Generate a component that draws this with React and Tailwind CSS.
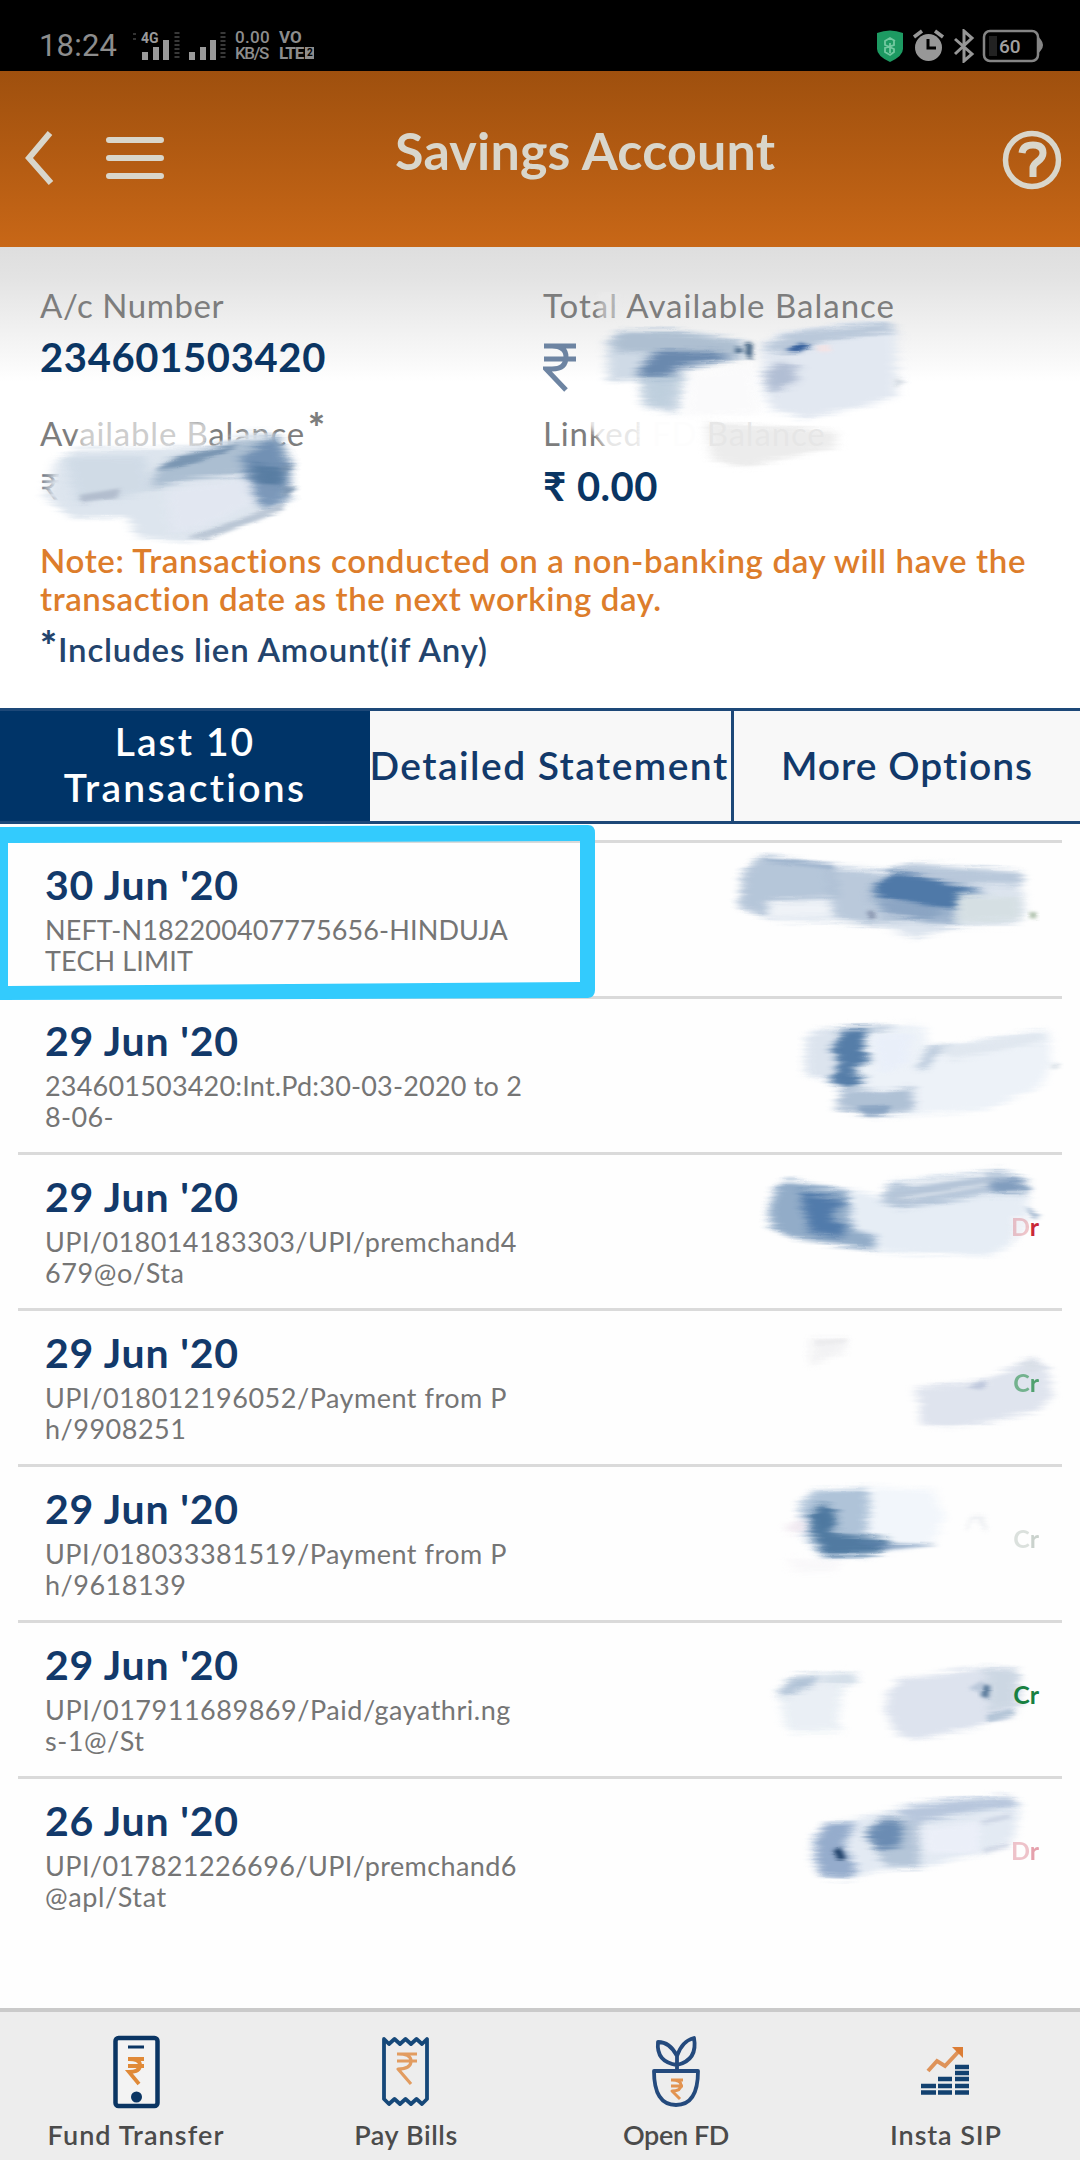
import React from "react";

const NAVY = "#0a3563";

/* Soft, dry-brush edge: blur mostly along the stroke, then streak it with stretched noise. */
function Brush({ id, blur, streak }) {
  return (
    <filter id={id} x="-40%" y="-60%" width="180%" height="220%" colorInterpolationFilters="sRGB">
      <feGaussianBlur stdDeviation={blur} result="soft" />
      <feTurbulence type="fractalNoise" baseFrequency="0.006 0.09" numOctaves="2" seed="4" result="noise" />
      <feDisplacementMap in="soft" in2="noise" scale={streak} xChannelSelector="R" yChannelSelector="G" />
      <feGaussianBlur stdDeviation="2 1.200" />
    </filter>
  );
}

/* One brush smear: a list of filled shapes, each softened. */
function Smear({ id, viewBox, shapes, className }) {
  return (
    <svg className={className} viewBox={viewBox} preserveAspectRatio="none" fill="none" aria-hidden="true">
      <g transform="translate(0 0)">
        <defs>
          <Brush id={id + "s"} blur="8 4" streak={12} />
          <Brush id={id + "m"} blur="15 8" streak={26} />
        </defs>
        {shapes.map(([d, fill, opacity, blur], i) => (
          <path key={i} d={d} fill={fill} opacity={opacity} filter={`url(#${id}${blur || "m"})`} />
        ))}
      </g>
    </svg>
  );
}

const B1 = "#5f83ad";
const B2 = "#a9bcd2";
const B3 = "#dce4ee";
const W = "#ffffff";

const rows = [
  {
    date: "30 Jun '20",
    lines: [["NEFT-N182200407775656-HINDUJA", "tracking-[0.13px]"], ["TECH LIMIT", "tracking-[0.13px]"]],
    viewBox: "0 33 1140 468",
    smear: [
      ["M130 130 L180 78 L400 100 L560 122 L640 98 L960 130 L975 240 L950 282 L770 290 L650 325 L520 285 L400 275 L220 270 L120 235 Z", B3, 1],
      ["M130 130 L180 80 L400 105 L420 200 L200 215 L200 260 L120 230 Z", B2, 0.75],
      ["M380 115 L560 130 L520 250 L540 290 L400 265 Z", B2, 0.65],
      ["M560 125 L640 102 L970 128 L960 165 L800 160 L700 270 L540 280 L500 200 Z", B2, 0.7],
      ["M180 84 L400 104 L400 118 L200 96 Z", B1, 0.3, "s"],
      ["M520 175 L575 128 L660 138 L860 185 L775 196 L770 242 L600 216 L530 200 Z", "#4f79a8", 1],
      ["M535 175 L580 134 L660 142 L770 175 L765 236 L600 210 Z", "#4f79a8", 0.6, "s"],
      ["M535 210 L760 240 L780 285 L690 280 L540 240 Z", B1, 0.5],
      ["M770 195 L960 200 L960 270 L770 280 Z", "#d3dedf", 0.7],
      ["M500 245 L520 240 L528 262 L512 270 Z", "#63708f", 0.6, "s"],
      ["M210 215 L380 215 L390 262 L215 262 Z", W, 0.55],
      ["M990 245 L1010 248 L1004 268 L992 264 Z", "#7c9a78", 0.75, "s"],
    ],
  },
  {
    date: "29 Jun '20",
    lines: [["234601503420:Int.Pd:30-03-2020 to 2", "tracking-[0.2px]"], ["8-06-", "tracking-[0.4px]"]],
    viewBox: "0 501 1140 468",
    smear: [
      ["M320 620 L360 595 L640 580 L680 600 L680 650 L1040 600 L1060 700 L1020 770 L860 840 L560 860 L430 830 L420 770 L320 730 Z", "#edf2f8", 1],
      ["M320 620 L370 595 L480 590 L470 760 L320 735 Z", B3, 0.95],
      ["M380 600 L560 582 L600 590 L510 610 Z", B2, 0.7],
      ["M395 660 L430 598 L500 595 L490 660 L515 690 L450 720 L500 745 L450 776 L390 755 L420 700 Z", "#557da8", 1],
      ["M405 655 L430 605 L480 605 L470 665 L435 690 L480 750 L445 768 L410 750 L420 700 Z", "#557da8", 0.4, "s"],
      ["M420 790 L460 770 L550 790 L640 770 L640 840 L520 860 L410 835 Z", B2, 0.9],
      ["M470 830 L570 825 L560 850 L500 858 Z", B1, 0.45, "s"],
      ["M650 715 L690 650 L760 645 L700 680 L680 720 Z", B2, 0.8],
      ["M700 655 L1020 605 L1040 630 L760 690 Z", "#dbe3ec", 0.7],
      ["M1050 705 L1078 700 L1078 715 L1056 718 Z", "#cfd8e0", 0.7, "s"],
      ["M520 620 L640 610 L620 700 L540 730 Z", "#e9effa", 0.9],
    ],
  },
  {
    date: "29 Jun '20",
    lines: [["UPI/018014183303/UPI/premchand4", "tracking-[0.41px]"], ["679@o/Sta", "tracking-[0.6px]"]],
    viewBox: "0 970 1140 468",
    tag: ["Dr", "text-[#c92838]", "opacity-25", "opacity-100"],
    smear: [
      ["M220 1090 L260 1050 L460 1080 L540 1100 L580 1050 L920 1020 L980 1050 L985 1150 L930 1250 L860 1280 L580 1270 L400 1245 L205 1185 Z", "#e6edf5", 1],
      ["M220 1090 L260 1052 L440 1085 L460 1200 L530 1220 L520 1262 L280 1225 L205 1185 Z", "#8ea9c6", 0.95],
      ["M300 1085 L440 1115 L400 1140 L400 1170 L440 1195 L420 1225 L330 1210 Z", "#4b76a8", 0.9],
      ["M560 1070 L900 1022 L980 1050 L975 1100 L870 1090 L600 1140 L545 1115 Z", B2, 0.8],
      ["M590 1060 L850 1030 L860 1040 L640 1072 Z", W, 0.55, "s"],
      ["M580 1105 L860 1060 L870 1068 L640 1110 Z", W, 0.35, "s"],
      ["M870 1050 L960 1040 L970 1085 L880 1095 Z", B1, 0.6],
      ["M950 1060 L1005 1078 L975 1086 Z", B1, 0.5, "s"],
      ["M975 1130 L1025 1158 L1000 1170 Z", B1, 0.5, "s"],
      ["M930 1160 L985 1160 L975 1200 L940 1240 Z", "#f1f2f7", 0.9, "s"],
    ],
  },
  {
    date: "29 Jun '20",
    lines: [["UPI/018012196052/Payment from P", "tracking-[0.51px]"], ["h/9908251", "tracking-[0.5px]"]],
    viewBox: "0 118 1140 468",
    tag: ["Cr", "text-[#2d9150]", "opacity-60", "opacity-80"],
    smear: [
      ["M330 205 L440 205 L430 250 L330 290 Z", "#f0f0f2", 0.8],
      ["M345 212 L440 206 L440 220 L350 226 Z", "#e6e6e9", 0.6, "s"],
      ["M640 355 L860 330 L960 280 L1000 262 L1040 290 L1060 380 L1010 425 L860 460 L740 475 L660 465 L660 400 Z", "#dfe4ee", 1],
      ["M800 352 L850 332 L862 345 L840 360 Z", "#bcc6db", 0.9, "s"],
      ["M960 285 L1000 268 L1035 292 L980 310 Z", "#d8dee6", 0.9],
    ],
  },
  {
    date: "29 Jun '20",
    lines: [["UPI/018033381519/Payment from P", "tracking-[0.51px]"], ["h/9618139", "tracking-[0.5px]"]],
    viewBox: "0 585 1140 468",
    tag: ["Cr", "text-[#a9b6ad]", "opacity-40", "opacity-60"],
    smear: [
      ["M300 710 L340 660 L520 650 L700 660 L730 740 L700 820 L500 865 L380 868 L300 800 Z", "#f2f6fb", 1],
      ["M300 710 L340 662 L500 655 L510 700 L500 790 L550 815 L500 862 L370 868 L310 790 Z", "#a4bbd3", 0.85],
      ["M330 735 L370 695 L415 735 L395 785 L570 812 L540 848 L380 854 L335 790 Z", "#4c779f", 0.95],
      ["M340 740 L370 715 L405 745 L385 775 L350 770 Z", "#4c779f", 0.5, "s"],
      ["M460 815 L720 825 L560 840 Z", B1, 0.6, "s"],
      ["M255 770 L310 740 L320 790 L260 790 Z", "#f0e8f0", 0.9],
      ["M260 860 L420 880 L420 905 L280 905 Z", "#f6f4f7", 0.6],
      ["M795 770 L815 735 L855 735 L862 790 L845 775 L835 750 L810 755 L803 785 Z", "#eef0f3", 0.9, "s"],
    ],
  },
  {
    date: "29 Jun '20",
    lines: [["UPI/017911689869/Paid/gayathri.ng", "tracking-[0.53px]"], ["s-1@/St", "tracking-[0.5px]"]],
    viewBox: "0 -57 1140 468",
    tag: ["Cr", "text-[#188041]", "opacity-100", "opacity-100"],
    smear: [
      ["M235 160 L280 108 L440 95 L480 110 L430 150 L410 250 L430 275 L270 275 L245 220 Z", "#e9eff5", 0.95],
      ["M235 160 L275 115 L360 105 L340 135 L260 165 Z", "#b0c2d6", 1],
      ["M350 110 L470 95 L460 135 L380 130 Z", "#d2dde8", 0.9],
      ["M560 160 L600 120 L860 80 L950 85 L965 190 L940 225 L800 270 L640 300 L590 285 L560 220 Z", "#dde3ee", 1],
      ["M850 85 L950 90 L955 190 L870 215 Z", "#c9d5e1", 0.8],
      ["M860 225 L940 205 L945 225 L860 245 Z", "#a9bdd1", 0.8, "s"],
      ["M843 168 L850 132 L870 138 L864 176 Z", "#4f7194", 1, "s"],
      ["M805 145 L850 120 L845 160 Z", "#b2c2d6", 0.8, "s"],
    ],
  },
  {
    date: "26 Jun '20",
    lines: [["UPI/017821226696/UPI/premchand6", "tracking-[0.41px]"], ["@apl/Stat", "tracking-[0.6px]"]],
    viewBox: "0 411 1140 468",
    tag: ["Dr", "text-[#e08a98]", "opacity-50", "opacity-80"],
    smear: [
      ["M340 590 L390 545 L540 520 L640 490 L920 465 L960 495 L940 600 L850 640 L680 680 L540 690 L460 715 L380 710 L330 660 Z", "#e3eaf3", 1],
      ["M345 600 L380 550 L470 550 L430 610 L470 690 L450 715 L360 705 L350 660 Z", "#91a9ca", 0.95],
      ["M495 575 L560 525 L660 540 L660 680 L560 680 L520 620 Z", B2, 0.8],
      ["M495 580 L550 542 L610 550 L605 622 L540 634 Z", B1, 0.85],
      ["M590 515 L650 495 L930 468 L960 495 L850 510 L640 550 Z", "#b3c3da", 0.9],
      ["M660 570 L840 545 L840 635 L680 640 Z", "#eef1fa", 0.8],
      ["M400 630 L420 618 L438 658 L414 658 Z", "#1f4068", 1, "s"],
      ["M850 625 L930 605 L930 625 L850 640 Z", "#c6cfe0", 0.7, "s"],
      ["M840 540 L930 520 L930 535 L850 556 Z", "#c6cfe0", 0.7, "s"],
    ],
  },
];

function StatusBar() {
  return (
    <div className="flex h-[71px] shrink-0 items-start bg-black pl-[39px] pr-[36px] pt-[29px] text-[#8d8d8d]">
      <span className="w-[94px] font-['Roboto'] text-[31px] leading-[34px] tracking-[0.2px]">18:24</span>
      <svg className="h-[34px] w-[98px]" viewBox="133 29 98 34" aria-hidden="true">
        <g fill="#9a9a9a">
          <path d="M142 60v-8h6v8zM153 60v-13h6v13zM163 60V40h6v20zM189 60v-8h6v8zM200 60v-13h6v13zM210 60V40h6v20z" />
        </g>
        <path d="M177 32v28M223 32v28" stroke="#383838" strokeWidth="5" strokeDasharray="2 2" />
        <path d="M134 33v10" stroke="#333" strokeWidth="4" strokeDasharray="2 3" />
        <text x="141" y="43" fontSize="14" fontWeight="700" fill="#9a9a9a" fontFamily="Roboto, sans-serif">4G</text>
      </svg>
      <div className="ml-1 flex w-[44px] flex-col font-['Roboto'] text-[17px] font-medium leading-[16px]">
        <span className="tracking-[0.3px]">0.00</span>
        <span className="tracking-[-1.4px]">KB/S</span>
      </div>
      <div className="flex flex-col font-['Roboto'] text-[17px] font-bold leading-[16px]">
        <span>VO</span>
        <span className="flex items-center tracking-[-1px]">
          LTE<span className="ml-0.5 flex h-3 w-[9px] items-center justify-center bg-[#8d8d8d] text-[10px] leading-none tracking-normal text-black">2</span>
        </span>
      </div>
      <svg className="ml-auto h-[34px] w-[168px]" viewBox="876 29 168 34" fill="none" aria-hidden="true">
        <path d="M877 33q13-5 26 0v16q0 7-13 13-13-6-13-13z" fill="#1d9a62" />
        <path d="M895 41l-5-3-5 3v4l9 4v3l-4 3-5-3v-4l9-3v-4M890 43v10" stroke="#73c9a0" strokeWidth="1.800" />
        <circle cx="928.500" cy="47.500" r="13.500" fill="#979797" />
        <path d="M914 37l8-6M943 37l-8-6" stroke="#979797" strokeWidth="3.500" />
        <path d="M928 39v9h8" stroke="#000" strokeWidth="3" />
        <path d="M955 39l17 15-8 7V31l8 7-17 16" stroke="#979797" strokeWidth="3" />
        <rect x="984" y="31" width="54" height="30" rx="6" stroke="#858585" strokeWidth="2.500" />
        <path d="M1040 40q4 5 0 10z" fill="#858585" stroke="#858585" strokeWidth="2" />
        <rect x="989" y="36" width="8" height="20" fill="#222" />
        <text x="999" y="53" fontSize="19" fontWeight="500" fill="#a0a0a0" fontFamily="Roboto, sans-serif">60</text>
      </svg>
    </div>
  );
}

function Header() {
  return (
    <header className="flex h-[176px] shrink-0 items-start bg-gradient-to-b from-[#9f500e] to-[#c86717] pl-[22px] pr-[17px] text-[#d9d6cb]">
      <svg className="mt-[58px] h-[58px] w-[33px]" viewBox="0 0 33 58" fill="none" stroke="currentColor" strokeWidth="6" aria-hidden="true">
        <path d="M28 4L7 29l22 25" />
      </svg>
      <svg className="ml-[50px] mt-[62px] h-[50px] w-[60px]" viewBox="0 0 60 50" fill="none" stroke="currentColor" strokeWidth="6" strokeLinecap="round" aria-hidden="true">
        <path d="M4 7h52M4 25h52M4 43h52" />
      </svg>
      <h1 className="ml-[230px] mt-[47px] whitespace-nowrap text-[52px] font-bold leading-[64px] tracking-[0.2px]">Savings Account</h1>
      <svg className="ml-auto mt-[59px] h-[62px] w-[62px]" viewBox="0 0 62 62" fill="none" stroke="currentColor" aria-hidden="true">
        <circle cx="31" cy="30" r="26.500" strokeWidth="5.500" />
        <path d="M21 23q1-8 11-8 10 0 10 8 0 5-6 9-4 3-4 6v9" strokeWidth="7" />
      </svg>
    </header>
  );
}

function Summary() {
  return (
    <section className="relative h-[461px] shrink-0 bg-white bg-[linear-gradient(to_bottom,#dedede_0px,#e3e3e3_30px,#eeeeee_72px,#fafafa_118px,#ffffff_135px)] pl-[40px] pt-[38px] text-[#7d7d7d]">
      <div className="grid grid-cols-[503px_1fr]">
        <div>
          <div className="text-[33px] leading-[40px] tracking-[0.57px]">A/c Number</div>
          <div className="mt-[8px] text-[40px] font-bold leading-[48px] tracking-[0.63px] text-[#0a3563]">234601503420</div>
          <div className="mt-[32px] flex text-[33px] leading-[40px] tracking-[0.81px]">
            Available Balance<span className="-mt-[5px] ml-[3px] text-[40px] font-black">*</span>
          </div>
          <div className="mt-[9px] text-[36px] leading-[48px] text-[#6f7885]">₹</div>
        </div>
        <div>
          <div className="text-[33px] leading-[40px] tracking-[1.02px]">Total Available Balance</div>
          <svg className="mt-[17px] h-[50px] w-[36px]" viewBox="0 0 36 50" fill="none" stroke="#6d84a2" strokeWidth="5" aria-hidden="true">
            <path d="M1 4h32M1 17h32M1 4h8q14 0 14 11 0 12-14 12H3l20 21" />
          </svg>
          <div className="mt-[21px] text-[33px] leading-[40px] tracking-[0.81px]">Linked FD Balance</div>
          <div className="mt-[9px] text-[40px] font-bold leading-[48px] tracking-[0.5px] text-[#0a3563]">₹ 0.00</div>
        </div>
      </div>
      <p className="mt-[31px] whitespace-nowrap text-[33px] font-semibold leading-[38px] text-[#dd7d2b]">
        <span className="block tracking-[0.65px]">Note: Transactions conducted on a non-banking day will have the</span>
        <span className="block tracking-[0.6px]">transaction date as the next working day.</span>
      </p>
      <p className="mt-[12px] flex whitespace-nowrap text-[33px] font-semibold leading-[40px] tracking-[0.8px] text-[#23446d]">
        <span className="-mt-[3px] mr-px text-[40px] font-black tracking-normal">*</span>Includes lien Amount(if Any)
      </p>
      <Smear
        id="left"
        className="absolute left-0 top-[23px] h-[290px] w-[540px]"
        viewBox="0 0 1568 870"
        shapes={[
          ["M230 450 L520 450 L610 460 L600 535 L230 535 Z", W, 0.62, "s"],
          ["M160 580 L220 535 L620 530 L700 490 L790 490 L840 570 L840 690 L700 760 L540 815 L400 800 L370 740 L210 745 L130 680 Z", "#dde5ee", 1],
          ["M190 560 L420 560 L440 660 L330 690 L220 700 Z", "#cdd9e5", 0.8],
          ["M230 675 L350 655 L340 685 L240 700 Z", "#a9b4c6", 0.75, "s"],
          ["M445 610 L500 565 L700 515 L810 500 L840 600 L720 610 L560 630 L440 655 Z", "#a6bace", 0.9],
          ["M450 600 L520 560 L700 520 L650 550 L520 592 Z", "#6e8cab", 0.8, "s"],
          ["M700 560 L800 500 L840 580 L835 690 L770 720 L720 670 Z", "#6486ad", 0.8],
          ["M730 580 L830 600 L820 650 L740 640 Z", "#53799f", 0.85],
          ["M820 580 L860 590 L820 610 Z M820 650 L865 650 L825 685 Z", "#6c88a6", 0.7, "s"],
          ["M480 660 L720 625 L740 700 L600 770 L500 790 Z", "#e3e8f2", 0.9],
          ["M540 805 L820 700 L825 720 L600 810 Z", "#aebccd", 0.8, "s"],
        ]}
      />
      <Smear
        id="right"
        className="absolute left-[540px] top-[23px] h-[290px] w-[540px]"
        viewBox="0 0 1568 870"
        shapes={[
          ["M170 70 L225 70 L230 150 L170 150 Z", "#ececec", 0.5, "s"],
          ["M120 435 L890 435 L890 550 L200 550 Z", W, 0.82, "s"],
          ["M290 430 L470 430 L460 560 L290 560 Z", W, 0.95, "s"],
          ["M480 455 L860 485 L860 530 L600 590 L500 570 Z", "#e6e6e6", 0.75],
          ["M195 215 L230 180 L400 180 L590 210 L610 260 L430 300 L400 435 L300 410 L290 330 L200 335 Z", "#cfdae6", 1],
          ["M200 220 L240 182 L400 185 L585 215 L580 260 L350 250 L230 245 Z", "#a9bbce", 0.85],
          ["M285 295 L340 243 L500 245 L570 265 L400 292 L380 330 L300 325 Z", "#6081a9", 0.9],
          ["M300 320 L400 310 L380 410 L310 400 Z", "#b4c8d8", 0.6],
          ["M430 315 L620 290 L640 430 L420 440 Z", "#fafafb", 0.9],
          ["M568 232 L592 240 L570 252 Z M600 220 L617 220 L614 270 L598 255 Z", "#2c5074", 1, "s"],
          ["M640 235 L700 185 L1000 150 L1035 190 L1035 380 L900 420 L770 445 L670 420 L650 360 Z", "#e2e8f1", 1],
          ["M645 235 L720 190 L1010 155 L1030 185 L840 210 L720 255 Z", "#b3c3d6", 0.85],
          ["M712 242 L755 218 L790 228 L750 247 Z", "#345f9c", 1, "s"],
          ["M650 320 L690 275 L750 290 L740 340 L670 370 Z", "#a9b7cf", 0.85],
          ["M1030 325 L1065 335 L1030 350 Z", "#c5ced8", 0.7, "s"],
          ["M800 230 L840 225 L845 245 L810 245 Z", "#f5e3e4", 0.9, "s"],
        ]}
      />
    </section>
  );
}

function Tabs() {
  return (
    <nav className="grid h-[116px] shrink-0 grid-cols-[370px_364px_1fr] border-y-[3px] border-[#1d4878] bg-[#f8f8f8] text-center text-[39px] font-semibold leading-[46px] text-[#12396a]">
      <div className="flex items-center justify-center bg-[#003468] pb-[5px] text-white">
        <span>
          <span className="block tracking-[2.1px]">Last 10</span>
          <span className="block tracking-[2.3px]">Transactions</span>
        </span>
      </div>
      <div className="flex items-center justify-center whitespace-nowrap border-r-[3px] border-[#1d4878] pb-[3px] pr-[3px] tracking-[1.45px]">Detailed Statement</div>
      <div className="flex items-center justify-center whitespace-nowrap pb-[3px] tracking-[1px]">More Options</div>
    </nav>
  );
}

function Transaction({ row, index }) {
  return (
    <li className="relative mx-[18px] flex h-[156px] border-t-[3px] border-[#dadada] pl-[27px] pt-[18px]">
      <div className="whitespace-nowrap">
        <div className="text-[41px] font-bold leading-[48px] tracking-[0.8px] text-[#12396a]">{row.date}</div>
        <div className="mt-[5px] text-[27px] leading-[31px] text-[#757575]">
          {row.lines.map(([text, tracking]) => (
            <span key={text} className={"block " + tracking}>{text}</span>
          ))}
        </div>
      </div>
      <Smear id={"row" + index} className="absolute -right-[18px] -top-[2px] h-[156px] w-[380px]" viewBox={row.viewBox} shapes={row.smear} />
      {row.tag && (
        <span className={"relative ml-auto mr-[23px] mt-[37px] text-[25px] font-bold leading-[32px] " + row.tag[1]}>
          <span className={row.tag[2]}>{row.tag[0][0]}</span>
          <span className={row.tag[3]}>{row.tag[0][1]}</span>
        </span>
      )}
    </li>
  );
}

const icons = {
  phone: (
    <svg className="h-[76px] w-[72px]" viewBox="0 0 72 76" fill="none" aria-hidden="true">
      <rect x="16.500" y="4" width="42" height="68" rx="3" stroke={NAVY} strokeWidth="4.500" fill="#f3f3f3" />
      <path d="M29 13h16" stroke={NAVY} strokeWidth="3" />
      <path d="M29 25h16M29 32h16M30 25q11 0 11 6 0 7-11 7l10 12" stroke="#e08a38" strokeWidth="3.800" />
      <circle cx="37.500" cy="63" r="5.500" fill={NAVY} />
    </svg>
  ),
  bill: (
    <svg className="h-[76px] w-[72px]" viewBox="0 0 72 76" fill="none" strokeLinejoin="round" aria-hidden="true">
      <path d="M15 5l5 5 5.500-5 5.500 5 5.500-5 5.500 5 5.500-5 5.500 5 5-5v60l-5 5-5.500-5-5.500 5-5.500-5-5.500 5-5.500-5-5.500 5-5-5z" stroke="#164879" strokeWidth="3.800" />
      <path d="M28 20h20M28 27h20M29 20q13 0 13 7 0 8-13 8l13 15" stroke="#e29c60" strokeWidth="3.200" />
    </svg>
  ),
  plant: (
    <svg className="h-[76px] w-[72px]" viewBox="0 0 72 76" fill="none" stroke="#244a7d" strokeWidth="3.800" strokeLinejoin="round" aria-hidden="true">
      <path d="M15 37h44q0 34-22 34T15 37z" />
      <path d="M38 37V22q-7-14-19-14-2 20 19 23" />
      <path d="M38 22q5-15 17-18 4 22-17 27" />
      <path d="M32 46h12M32 52h12M33 46q9 0 9 5 0 6-9 6l8 8" stroke="#e29350" strokeWidth="3" />
    </svg>
  ),
  sip: (
    <svg className="h-[76px] w-[72px]" viewBox="0 0 72 76" fill="none" aria-hidden="true">
      <path d="M19 37l9-10 8 5 15-16" stroke="#de935a" strokeWidth="4" />
      <path d="M43 13h11v11z" fill="#dc7d35" />
      <path d="M12 52h15M12 58.500h15M29 45h14M29 52h14M29 58.500h14M46 33h14M46 39h14M46 45h14M46 52h14M46 58.500h14" stroke="#124170" strokeWidth="4.600" />
    </svg>
  ),
};

const actions = [
  ["phone", "Fund Transfer", "tracking-[1.1px]"],
  ["bill", "Pay Bills", "tracking-[0.6px]"],
  ["plant", "Open FD", "tracking-[-0.4px]"],
  ["sip", "Insta SIP", "tracking-[0.9px]"],
];

export default function App() {
  return (
    <div className="flex h-[2160px] w-[1080px] flex-col overflow-hidden bg-white font-['Lato','Noto_Sans',sans-serif]">
      <StatusBar />
      <Header />
      <Summary />
      <Tabs />
      <main className="relative flex-1 bg-[#fefefe] pt-[16px]">
        <ul>
          {rows.map((row, i) => (
            <Transaction key={i} row={row} index={i} />
          ))}
        </ul>
        <svg className="absolute left-0 top-0 h-[180px] w-[600px]" viewBox="0 824 600 180" fill="none" aria-hidden="true">
          <path fillRule="evenodd" fill="#33cbfd" d="M0 827L588 825q7 0 7 8V990q0 7-7 8L0 1000zM8 843V986L580 982V841z" />
        </svg>
      </main>
      <footer className="grid h-[152px] shrink-0 grid-cols-4 border-t-[4px] border-[#cacaca] bg-[#ededed]">
        {actions.map(([icon, label, tracking]) => (
          <div key={label} className="flex flex-col items-center pt-[22px]">
            {icons[icon]}
            <span className={"ml-[2px] mt-[9px] text-[27px] font-semibold leading-[32px] text-[#4b4b4b] " + tracking}>{label}</span>
          </div>
        ))}
      </footer>
    </div>
  );
}
